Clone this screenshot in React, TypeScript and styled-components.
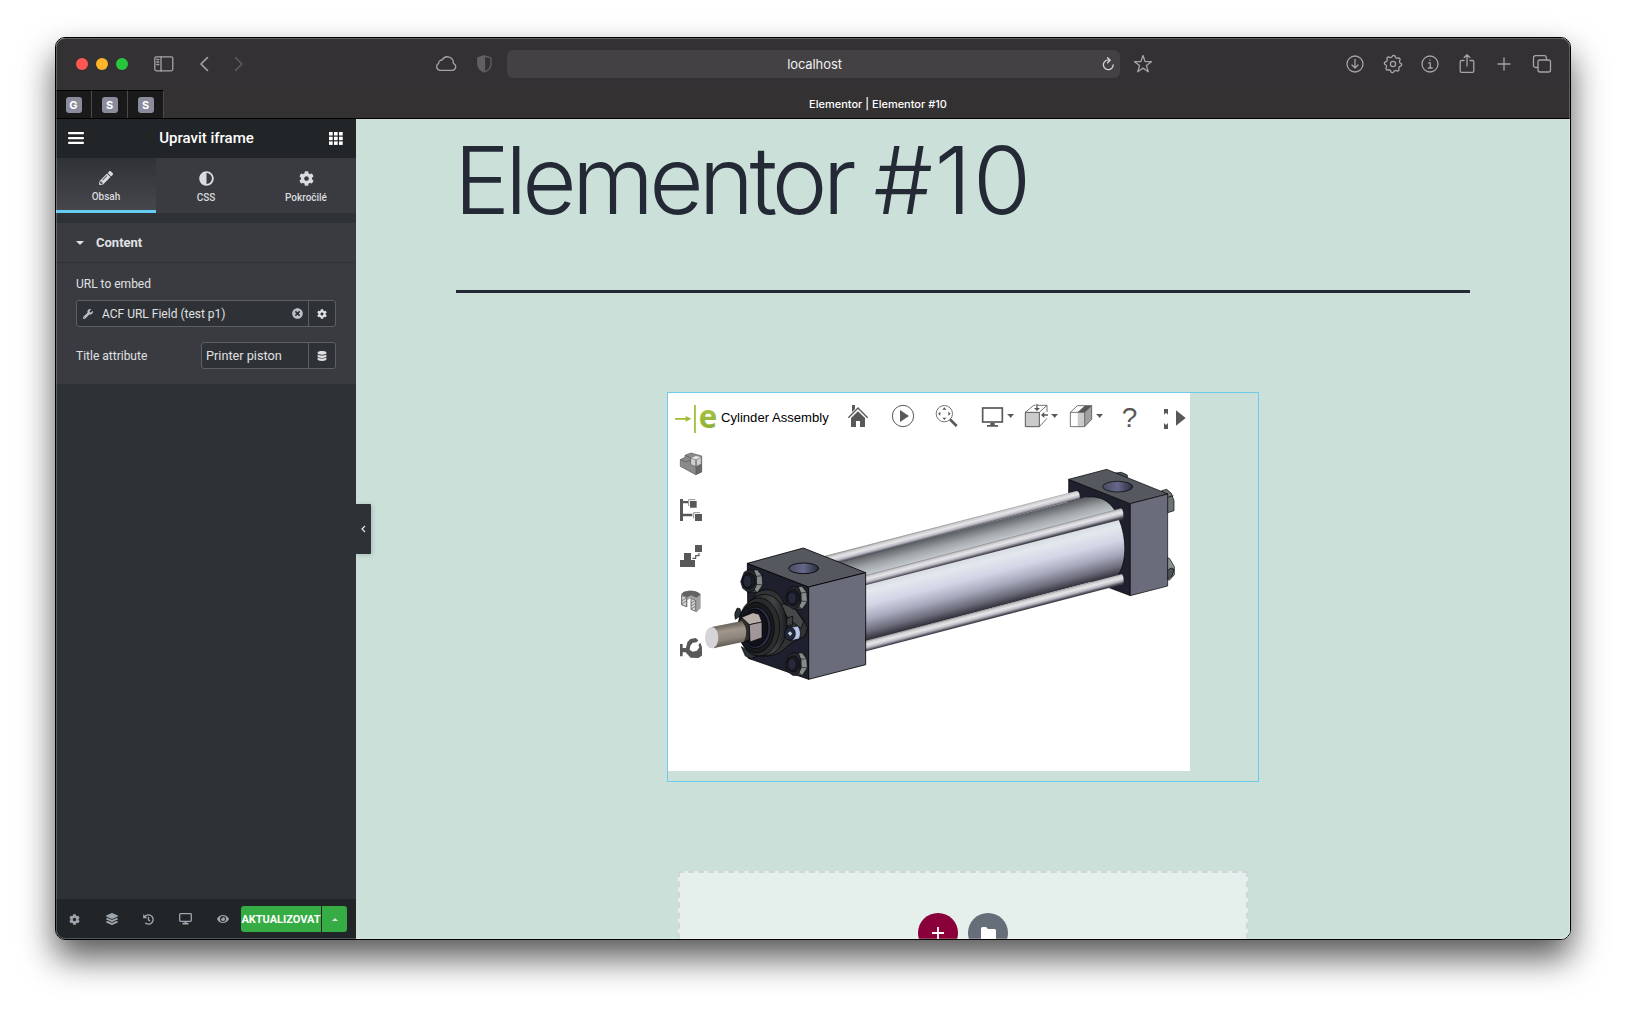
import React from 'react';
import styled, { createGlobalStyle } from 'styled-components';
import { FaCog, FaLayerGroup, FaHistory, FaEye, FaWrench, FaDatabase, FaAdjust, FaTimesCircle, FaPencilAlt } from 'react-icons/fa';

const Global = createGlobalStyle`
  html, body { margin: 0; padding: 0; background: #fff; overflow: hidden; }
  * { box-sizing: border-box; }
  svg { display: block; flex: none; }
`;

const Desktop = styled.div`
  width: 1626px;
  height: 1013px;
  padding: 37px 55px 73px;
  overflow: hidden;
  background: #fff;
`;

const Window = styled.div`
  position: relative;
  width: 1516px;
  height: 903px;
  border: 1px solid #000;
  border-radius: 10px;
  overflow: hidden;
  display: flex;
  flex-direction: column;
  box-shadow: 0 18px 34px rgba(0, 0, 0, 0.66);
  &::after {
    content: '';
    position: absolute;
    inset: 0;
    border-radius: 9px;
    pointer-events: none;
    box-shadow: inset 0 0 0 1px rgba(255, 255, 255, 0.22);
  }
`;

const Toolbar = styled.header`
  height: 52px;
  background: #333134;
  display: flex;
  align-items: center;
  padding-left: 20px;
  color: #a5a4a6;
`;

const Light = styled.span<{ $color: string }>`
  width: 12px;
  height: 12px;
  margin-right: 8px;
  border-radius: 50%;
  background: ${(p) => p.$color};
`;

const ChromeIcon = styled.svg<{ $ml: number }>`
  margin-left: ${(p) => p.$ml}px;
  fill: none;
  stroke: currentColor;
  stroke-width: 1.3;
  stroke-linecap: round;
  stroke-linejoin: round;
`;

const Address = styled.div`
  width: 613px;
  height: 28px;
  margin-left: 15px;
  border-radius: 6px;
  background: #434144;
  display: flex;
  align-items: center;
  justify-content: flex-end;
  padding-right: 5px;
  color: #d5d4d6;
`;

const Host = styled.span`
  flex: 1;
  text-align: center;
  padding-left: 20px;
  font: 400 13px Inter, sans-serif;
  letter-spacing: -0.1px;
  color: #f1f0f1;
`;

const TabBar = styled.div`
  height: 29px;
  background: #333132;
  border-bottom: 1px solid #000;
  display: flex;
`;

const Pinned = styled.div`
  width: 36px;
  border-top: 1px solid #000;
  border-right: 1px solid #4b494b;
  background: #1b1a1b;
  display: flex;
  align-items: center;
  justify-content: center;
`;

const Favicon = styled.span`
  width: 16px;
  height: 16px;
  border-radius: 3px;
  background: #8c8b9c;
  color: #fff;
  font: 700 11px/16px Inter, sans-serif;
  text-align: center;
`;

const TabTitle = styled.div`
  flex: 1;
  padding-left: 22px;
  text-align: center;
  font: 500 11px/29px Inter, sans-serif;
  color: #fff;
`;

const Body = styled.div`
  flex: 1;
  display: flex;
  min-height: 0;
`;

const Panel = styled.aside`
  width: 300px;
  background: #2e3135;
  display: flex;
  flex-direction: column;
  font-family: Roboto, sans-serif;
  color: #e0e1e3;
`;

const PanelHeader = styled.div`
  height: 39px;
  background: #222527;
  display: flex;
  align-items: center;
  justify-content: space-between;
  padding: 0 13px 1px 12px;
  fill: #fff;
`;

const PanelTitle = styled.h1`
  margin: 0;
  font-size: 15px;
  font-weight: 500;
  line-height: 18px;
  color: #fff;
`;

const Tabs = styled.div`
  display: flex;
  height: 55px;
  background: #393b40;
`;

const Tab = styled.div<{ $active?: boolean }>`
  flex: 1;
  padding-top: 13px;
  display: flex;
  flex-direction: column;
  align-items: center;
  gap: 5px;
  font-size: 10px;
  line-height: 13px;
  font-weight: 500;
  color: #dadbdd;
  background: ${(p) => (p.$active ? 'linear-gradient(#2f3236, #46474c)' : 'transparent')};
  border-bottom: ${(p) => (p.$active ? '3px solid #65cbf1' : '0')};
`;

const Section = styled.section`
  margin-top: 10px;
  height: 161px;
  background: #393b40;
`;

const SectionHead = styled.div`
  height: 40px;
  border-bottom: 1px solid #2e3135;
  display: flex;
  align-items: center;
  gap: 12px;
  padding-left: 20px;
  font-size: 13px;
  font-weight: 700;
`;

const Caret = styled.i<{ $up?: boolean; $size: number }>`
  border: ${(p) => p.$size}px solid transparent;
  border-${(p) => (p.$up ? 'bottom' : 'top')}-color: #e0e1e3;
  border-${(p) => (p.$up ? 'top' : 'bottom')}-width: 0;
`;

const Fields = styled.div`
  padding: 12px 20px 0;
  font-size: 12px;
`;

const Label = styled.label`
  display: block;
  line-height: 18px;
`;

const FieldRow = styled.div<{ $gap: number }>`
  display: flex;
  align-items: center;
  justify-content: space-between;
  margin-top: ${(p) => p.$gap}px;
`;

const Control = styled.div<{ $width: number; $pad: number }>`
  width: ${(p) => p.$width}px;
  height: 27px;
  border: 1px solid #5c5f64;
  border-radius: 3px;
  background: #2e3135;
  display: flex;
  align-items: center;
  padding-left: ${(p) => p.$pad}px;
`;

const Value = styled.span<{ $size: number }>`
  flex: 1;
  font-size: ${(p) => p.$size}px;
  white-space: nowrap;
`;

const WrenchBox = styled.span`
  width: 19px;
  color: #b9c2cb;
`;

const ClearBox = styled.span`
  margin-right: 5px;
  color: #b9c2cb;
`;

const Addon = styled.span`
  width: 27px;
  height: 25px;
  border-left: 1px solid #5c5f64;
  display: flex;
  align-items: center;
  justify-content: center;
`;

const PanelFooter = styled.footer`
  margin-top: auto;
  height: 40px;
  background: #222527;
  display: flex;
  align-items: center;
  color: #9da5ae;
`;

const FooterTool = styled.span`
  width: 37px;
  display: flex;
  justify-content: center;
`;

const Update = styled.div`
  display: flex;
  gap: 1px;
  height: 26px;
  color: #fff;
`;

const UpdateButton = styled.span<{ $width: number; $right?: boolean }>`
  width: ${(p) => p.$width}px;
  background: #36ad44;
  border-radius: ${(p) => (p.$right ? '0 3px 3px 0' : '3px 0 0 3px')};
  display: flex;
  align-items: center;
  justify-content: center;
  font-size: 11px;
  font-weight: 700;
  white-space: nowrap;
`;

const Preview = styled.main`
  position: relative;
  flex: 1;
  background: #cbe0d9;
  overflow: hidden;
`;

const Collapse = styled.div`
  position: absolute;
  left: 0;
  top: 385px;
  width: 15px;
  height: 50px;
  background: #2e3135;
  border-radius: 0 1px 1px 0;
  box-shadow: 1px 1px 5px rgba(0, 0, 0, 0.18);
  display: flex;
  align-items: center;
  justify-content: center;
`;

const PageTitle = styled.h2`
  margin: 0 98px;
  height: 171px;
  padding-top: 5px;
  font: 300 94px/112px Inter, sans-serif;
  letter-spacing: -4.8px;
  color: #242936;
  white-space: nowrap;
`;

const PageNumber = styled.span`
  letter-spacing: 1.6px;
`;

const Rule = styled.hr`
  margin: 0 100px;
  width: 1014px;
  height: 3px;
  border: 0;
  background: #242936;
`;

const Widget = styled.div`
  width: 592px;
  height: 390px;
  margin: 99px 0 0 311px;
  border: 1px solid #6ecbea;
`;

const Viewer = styled.div`
  width: 522px;
  height: 378px;
  background: #fff;
`;

const ViewerBar = styled.div`
  height: 48px;
  padding: 11px 0 0 7px;
  display: flex;
  align-items: flex-start;
`;

const Tool = styled.svg<{ $ml?: number }>`
  margin-left: ${(p) => p.$ml || 0}px;
  fill: #585858;
  overflow: visible;
`;

const ModelName = styled.span`
  width: 129px;
  padding-left: 3px;
  font: 13.1px/28px 'Liberation Sans', Arial, sans-serif;
  color: #000;
  white-space: nowrap;
`;

const ViewerBody = styled.div`
  display: flex;
`;

const SideTools = styled.div`
  width: 37px;
  padding: 11px 0 0 12px;
  display: flex;
  flex-direction: column;
  gap: 22px;
`;

const DropZone = styled.div`
  width: 570px;
  height: 120px;
  margin: 89px 0 0 322px;
  padding-top: 40px;
  border: 2px dashed #cfd7dc;
  background: #e5efeb;
  display: flex;
  justify-content: center;
  gap: 10px;
`;

const Round = styled.span<{ $color: string }>`
  width: 40px;
  height: 40px;
  border-radius: 50%;
  background: ${(p) => p.$color};
  display: flex;
  align-items: center;
  justify-content: center;
`;

const gearPath = Array.from({ length: 33 }, (_, i) => {
  const a = (i / 32) * Math.PI * 2;
  const r = i % 4 < 2 ? 8.6 : 6.9;
  return `${i ? 'L' : 'M'}${(10 + r * Math.cos(a)).toFixed(2)},${(10 + r * Math.sin(a)).toFixed(2)}`;
}).join('');

function BrowserToolbar() {
  return (
    <Toolbar>
      <Light $color="#ff5650" />
      <Light $color="#ffb429" />
      <Light $color="#28c73b" />
      <ChromeIcon $ml={18} width="20" height="16" viewBox="0 0 20 16">
        <rect x="0.8" y="0.8" width="18" height="14" rx="1.5" />
        <path d="M7 1v14M2.8 3.5h2M2.8 6h2M2.8 8.5h2" />
      </ChromeIcon>
      <ChromeIcon $ml={25} width="10" height="16" viewBox="0 0 10 16"><path d="M8.5 1.5 2 8l6.500 6.500" strokeWidth="1.600" /></ChromeIcon>
      <ChromeIcon $ml={25} width="10" height="16" viewBox="0 0 10 16" opacity="0.35"><path d="M1.500 1.500 8 8l-6.500 6.500" strokeWidth="1.600" /></ChromeIcon>
      <ChromeIcon $ml={191} width="22" height="16" viewBox="0 0 22 16">
        <path d="M5.300 14.300h11.700a3.600 3.600 0 0 0 1.300-7 5.900 5.900 0 0 0-11.100-3.300 3.200 3.200 0 0 0-3.500 3.300 3.700 3.700 0 0 0 1.600 7z" />
      </ChromeIcon>
      <ChromeIcon $ml={20} width="15" height="18" viewBox="0 0 15 18" opacity="0.4">
        <path d="M7.500 1 14 2.800V9c0 4-3 6.500-6.500 8C4 15.500 1 13 1 9V2.800z" />
        <path d="M7.500 1v16C4 15.500 1 13 1 9V2.800z" fill="currentColor" />
      </ChromeIcon>
      <Address>
        <Host>localhost</Host>
        <ChromeIcon $ml={0} width="13" height="15" viewBox="0 0 13 15"><path d="M8 3.200a4.900 4.900 0 1 0 3.200 4.600M5.600.8 8.200 3.200 5.600 5.700" /></ChromeIcon>
      </Address>
      <ChromeIcon $ml={13} width="20" height="20" viewBox="0 0 20 20">
        <path d="m10 1.500 2.100 6.100 6.400.1-5.100 3.900 1.900 6.200-5.300-3.700-5.300 3.700 1.900-6.200L1.500 7.700l6.400-.1z" />
      </ChromeIcon>
      <ChromeIcon $ml={192} width="20" height="20" viewBox="0 0 20 20"><circle cx="10" cy="10" r="8" /><path d="M10 5.500v8.500M7 11l3 3 3-3" /></ChromeIcon>
      <ChromeIcon $ml={18} width="20" height="20" viewBox="0 0 20 20"><path d={gearPath} /><circle cx="10" cy="10" r="2.600" /></ChromeIcon>
      <ChromeIcon $ml={17} width="20" height="20" viewBox="0 0 20 20"><circle cx="10" cy="10" r="8" /><path d="M8.500 8.800H10.300V14M8.300 14h4M10 5.900v.3" /></ChromeIcon>
      <ChromeIcon $ml={17} width="20" height="22" viewBox="0 0 20 22"><path d="M7 7.500H4.500a1.300 1.300 0 0 0-1.300 1.300V18a1.300 1.300 0 0 0 1.300 1.300h11a1.300 1.300 0 0 0 1.300-1.300V8.800a1.300 1.300 0 0 0-1.300-1.300H13M10 13V2M7.200 4.500 10 1.800l2.800 2.700" /></ChromeIcon>
      <ChromeIcon $ml={19} width="16" height="16" viewBox="0 0 16 16"><path d="M8 2v12M2 8h12" /></ChromeIcon>
      <ChromeIcon $ml={20} width="20" height="20" viewBox="0 0 20 20"><rect x="6" y="6" width="12.500" height="12" rx="2" /><path d="M5.800 13.500H3.500a2 2 0 0 1-2-2V3.700a2 2 0 0 1 2-2h8.800a2 2 0 0 1 2 2v2" /></ChromeIcon>
    </Toolbar>
  );
}

function ElementorPanel() {
  return (
    <Panel>
      <PanelHeader>
        <svg width="16" height="12" viewBox="0 0 16 12"><rect width="16" height="2.200" rx="1" /><rect y="5" width="16" height="2.200" rx="1" /><rect y="9.800" width="16" height="2.200" rx="1" /></svg>
        <PanelTitle>Upravit iframe</PanelTitle>
        <svg width="14" height="13" viewBox="0 0 14 13">
          {[0, 5, 10].map((x) => [0, 4.7, 9.4].map((y) => <rect key={`${x}-${y}`} x={x} y={y} width="3.700" height="3.500" />))}
        </svg>
      </PanelHeader>
      <Tabs>
        <Tab $active><FaPencilAlt size={14} />Obsah</Tab>
        <Tab><FaAdjust size={15} />CSS</Tab>
        <Tab><FaCog size={15} />Pokročilé</Tab>
      </Tabs>
      <Section>
        <SectionHead><Caret $size={4} />Content</SectionHead>
        <Fields>
          <Label>URL to embed</Label>
          <FieldRow $gap={7}>
            <Control $width={260} $pad={6}>
              <WrenchBox><FaWrench size={10} /></WrenchBox>
              <Value $size={12}>ACF URL Field (test p1)</Value>
              <ClearBox><FaTimesCircle size={11} /></ClearBox>
              <Addon><FaCog size={10} /></Addon>
            </Control>
          </FieldRow>
          <FieldRow $gap={15}>
            <Label>Title attribute</Label>
            <Control $width={135} $pad={4}>
              <Value $size={12.7}>Printer piston</Value>
              <Addon><FaDatabase size={10} /></Addon>
            </Control>
          </FieldRow>
        </Fields>
      </Section>
      <PanelFooter>
        <FooterTool><FaCog size={11} /></FooterTool>
        <FooterTool><FaLayerGroup size={12} /></FooterTool>
        <FooterTool><FaHistory size={11} /></FooterTool>
        <FooterTool>
          <svg width="13" height="12" viewBox="0 0 13 12" fill="none" stroke="currentColor" strokeWidth="1.300"><rect x="0.700" y="0.700" width="11.600" height="7.600" rx="0.800" /><path d="M3.500 10.600h6M6.500 8.500v2" strokeWidth="1.800" /></svg>
        </FooterTool>
        <FooterTool><FaEye size={12} /></FooterTool>
        <Update>
          <UpdateButton $width={80}>AKTUALIZOVAT</UpdateButton>
          <UpdateButton $width={25} $right><Caret $up $size={3} /></UpdateButton>
        </Update>
      </PanelFooter>
    </Panel>
  );
}

function ViewerToolbar() {
  return (
    <ViewerBar>
      <Tool width="43" height="30" viewBox="45 57 129 90">
        <defs><linearGradient id="leaf" x1="0" y1="0" x2="0" y2="1"><stop offset="0" stopColor="#b5d04b" /><stop offset="1" stopColor="#86a832" /></linearGradient></defs>
        <path d="M45 99h32v-6l17 8.500-17 8.500v-6H45z" fill="#9cbd35" />
        <rect x="102" y="60" width="5.500" height="84" fill="#9fc03a" />
        <text x="116" y="128" fontFamily="Open Sans, sans-serif" fontWeight="700" fontSize="94" fill="url(#leaf)">e</text>
      </Tool>
      <ModelName>Cylinder Assembly</ModelName>
      <Tool width="22" height="24" viewBox="561 57 66 72">
        <path d="M576 60h9v12l-9 9zM573 99l21-20 21 20v27h-15v-18h-12v18h-15z" />
        <path d="m565 98 29-29 29 29" fill="none" stroke="#585858" strokeWidth="4" />
      </Tool>
      <Tool $ml={22} width="24" height="24" viewBox="693 57 72 72"><circle cx="729" cy="93" r="32" fill="none" stroke="#585858" strokeWidth="3" /><path d="M720 75l27 18-27 18z" /></Tool>
      <Tool $ml={20} width="24" height="24" viewBox="15 57 72 72">
        <circle cx="43" cy="86" r="24.500" fill="none" stroke="#585858" strokeWidth="2.500" />
        <path d="m60 103 20 20" stroke="#585858" strokeWidth="8" />
        <path d="M43 67l6 7H37zM43 105l6-7H37zM24 86l7-6v12zM62 86l-7-6v12z" />
      </Tool>
      <Tool $ml={22} width="34" height="24" viewBox="153 57 102 72"><rect x="158" y="69" width="59" height="42" fill="none" stroke="#585858" strokeWidth="5" /><path d="M181 113h13v7h10v5h-33v-5h10zM231 87h21l-6 7-4 5-4-5z" /></Tool>
      <Tool $ml={9} width="35" height="24" viewBox="282 57 105 72">
        <path d="M286 82h42v43h-42z" fill="#cbcbcb" stroke="#585858" strokeWidth="3" />
        <path d="M286 82l25-21h6M324 61h27L328 82M351 61v20M351 100l-23 25" fill="none" stroke="#585858" strokeWidth="2.500" />
        <path d="M319 57h4v12h7l-9 9-9-9h7zM354 88v4h-11v7l-10-9 10-9v7zM363 87h21l-6 7-4 5-4-5z" />
      </Tool>
      <Tool $ml={10} width="35" height="24" viewBox="417 57 105 72">
        <path d="M421 82h22v43h-22z" fill="#fff" /><path d="M443 82h21v43h-21z" fill="#cbcbcb" /><path d="M464 82l21-20v41l-21 22z" fill="#a0a0a0" /><path d="M443 82l21-20h21l-21 20z" />
        <path d="M421 82h43v43h-43zl21-20h43v41l-21 22M464 82l21-20" fill="none" stroke="#585858" strokeWidth="2.500" />
        <path d="M498 87h21l-6 7-4 5-4-5z" />
      </Tool>
      <Tool $ml={18} width="15" height="24" viewBox="576 57 45 72"><text x="575" y="126" fontFamily="Liberation Sans, sans-serif" fontSize="84">?</text></Tool>
      <Tool $ml={26} width="6" height="26" viewBox="699 57 18 78"><path d="M702 72h12v17l-6-6-6 6zM702 132h12v-18l-6 6-6-6z" /></Tool>
      <Tool $ml={6} width="12" height="24" viewBox="735 57 36 72"><path d="M738 76l29 23-29 23z" /></Tool>
    </ViewerBar>
  );
}

function ViewerSideTools() {
  return (
    <SideTools>
      <Tool width="23" height="24" viewBox="60 6 69 72">
        <path d="M61 29l14-7V16l18-7 32 9v48l-18 8-46-25z" fill="#8a8a8c" />
        <path d="M108 50l17-7v23l-17 8z" fill="#69696b" />
        <path d="M61 29l14-7V16l18-7 32 9v48l-18 8-46-25z" fill="none" stroke="#585858" strokeWidth="2" />
        <path d="M92 24l16 5v21l-16-6zM108 29l16-8v21l-16 8z" fill="#cfcfcf" stroke="#585858" strokeWidth="2" />
        <path d="M92 24l16-7 16 4-16 8z" fill="#e4e4e4" stroke="#777" strokeWidth="1" />
        <path d="M108 50v23M76 16l16 8M61 29l17 7 14-6" stroke="#585858" strokeWidth="2" fill="none" />
      </Tool>
      <Tool width="23" height="24" viewBox="60 144 69 72"><path d="M60 147h9v6h15v7H69v31h28v8H69v14h-9zM90 153h20v20H90zM105 192h21v21h-21z" /><path d="M86 168v-19h20M101 205v-17h19" fill="none" stroke="#585858" strokeWidth="2" /></Tool>
      <Tool width="23" height="24" viewBox="60 282 69 72"><path d="M105 285h21v21h-21zM60 330h12v-21h21v21h12v21H60z" /><path d="M97 325h10v-8h10v-8" fill="none" stroke="#585858" strokeWidth="3.500" /></Tool>
      <Tool width="23" height="24" viewBox="60 420 69 72">
        <path d="M64 433c8-14 48-14 58 1v41l-14 13V450L93 444l-11 6v22l-18-6z" fill="#a2a2a2" />
        <path d="M64 433c8-14 48-14 58 1l-13 9-16-7-11 6z" fill="#636363" />
        <path d="M65 436l15 6v28l-15-6zM93 445l14 6v33l-14-6z" fill="#d3d3d3" stroke="#585858" strokeWidth="2.500" />
        <path d="M66 452l13-8M66 461l13-8M94 459l12-8M94 468l12-8M94 477l12-8" stroke="#585858" strokeWidth="2" />
      </Tool>
      <Tool width="23" height="24" viewBox="60 558 69 72"><path d="M60 582h8v12h11v13H68v12h-8zM82 577l9-10 16-3 8 7-5 6-12 1-7 9-2 12 9 6 13-3 7-10-3-7 6-7 5 14v25l-11 7-23-1-14-15v-14z" /></Tool>
    </SideTools>
  );
}

function Nut({ x, y }: { x: number; y: number }) {
  return (
    <g transform={`translate(${x} ${y})`} stroke="#08090c" strokeWidth="1.800">
      <path d="M-14-33 16-34 30-16 32 12 16 35-10 34z" fill="#3b4244" />
      <path d="M4-32 16-34 30-16 32 12 16 35 6 24 14 10 12-14z" fill="#848c8a" />
      <path d="M12-14 30-16M14 10l18 2" />
      <path d="M-24-26-8-35 6-30 13-12 12 16 4 30-12 34-28 22-34 2z" fill="#24272d" />
      <ellipse cx="-10" cy="0" rx="19" ry="24" fill="#191b22" />
      <ellipse cx="-14" cy="1" rx="13" ry="18" fill="#262939" />
    </g>
  );
}

function CylinderModel() {
  return (
    <svg width="485" height="330" viewBox="135 -27 1455 990" strokeLinejoin="round">
      <defs>
        <linearGradient id="tube" gradientUnits="userSpaceOnUse" x1="1000" y1="218" x2="1063" y2="462">
          <stop offset="0" stopColor="#606468" /><stop offset="0.120" stopColor="#a0a5a8" /><stop offset="0.250" stopColor="#cbd1d5" />
          <stop offset="0.420" stopColor="#e3e8ee" /><stop offset="0.580" stopColor="#d2d5e5" /><stop offset="0.740" stopColor="#a5a8ba" />
          <stop offset="0.880" stopColor="#6b6b79" /><stop offset="1" stopColor="#24212b" />
        </linearGradient>
        {[[1, 900, 211], [2, 1000, 274], [3, 1000, 471]].map(([n, x, y]) => (
          <linearGradient key={n} id={`rod${n}`} gradientUnits="userSpaceOnUse" x1={x} y1={y} x2={x + 7.6} y2={y + 29}>
            <stop offset="0" stopColor="#7c7c7e" /><stop offset="0.200" stopColor="#cdcdd0" /><stop offset="0.450" stopColor="#e6e6e9" />
            <stop offset="0.720" stopColor="#bbbac4" /><stop offset="1" stopColor="#44424e" />
          </linearGradient>
        ))}
        <linearGradient id="bore"><stop offset="0" stopColor="#4a4c60" /><stop offset="0.500" stopColor="#65688a" /><stop offset="1" stopColor="#2a2c3c" /></linearGradient>
        <linearGradient id="shaft" x1="0.400" y1="0" x2="0.600" y2="1"><stop offset="0" stopColor="#4e4943" /><stop offset="0.350" stopColor="#a0968c" /><stop offset="0.650" stopColor="#8d847b" /><stop offset="1" stopColor="#48433f" /></linearGradient>
        <linearGradient id="gland"><stop offset="0" stopColor="#17181a" /><stop offset="0.700" stopColor="#424445" /><stop offset="1" stopColor="#1b1c1e" /></linearGradient>
      </defs>

      <g stroke="#000" strokeWidth="2">
        <path d="M1360 70l24-3 18 8v12z" fill="#4d5557" />
        <path d="M1505 122l15-4 14 12 8 22v30l-19 6z" fill="#6b7374" /><path d="M1523 142l17-5" />
        <path d="M1521 322l8 4 14 24v24l-14 16h-8z" fill="#8a9292" /><path d="M1521 362l12-8 9 4-6 20-15 10z" fill="#4d5557" />
        <path d="M1226 88l185 73v276l-67-25-118-42z" fill="#1f202e" />
        <path d="M1226 88l114-30 184 74-113 29z" fill="#55585e" />
        <path d="M1411 161l112-29v276l-112 29z" fill="#6a6c7b" />
        <ellipse cx="1373" cy="110" rx="45" ry="16" fill="url(#bore)" />
      </g>

      <path d="M540 335 1280 141C1330 136 1360 162 1376 205C1403 270 1398 340 1375 374L600 578z" fill="url(#tube)" />
      <path d="M1280 141c50-5 80 21 96 64 27 65 22 135-1 169" fill="none" stroke="#000" strokeWidth="2" />
      <path d="M490 319 1248 123q13 0 11 23L530 340z" fill="url(#rod1)" />
      <path d="M610 377 1383 175q9 6 7 32L610 407z" fill="url(#rod2)" />
      <path d="M610 574 1385 372q8 6 5 31L610 606z" fill="url(#rod3)" />

      <g stroke="#000" strokeWidth="2.500">
        <path d="M262 340l184 71v277l-181-63z" fill="#1f202e" />
        <path d="M262 340l168-46 187 74-171 43z" fill="#55585e" />
        <path d="M446 411l171-43v276l-171 44z" fill="#6a6c7b" />
        <ellipse cx="431" cy="355" rx="45" ry="16" fill="url(#bore)" />
      </g>
      <Nut x={276} y={393} />
      <g stroke="#000" strokeWidth="2">
        <path d="M232 474l8 2 4 20-18 12q-6-20 6-34zM244 590l50 28-22 8-16-8z" fill="#2c3038" />
        <path d="M285 432c30-22 70-18 88 30l30 12 28 36 12 24-8 24-40 20-25 22c-30 24-70 22-95 10z" fill="#303234" />
        <path d="M355 466l17-4 31 12 28 40-8 22-36-30z" fill="#454849" />
        <ellipse cx="313" cy="525" rx="68" ry="92" fill="url(#gland)" />
        <ellipse cx="297" cy="531" rx="62" ry="87" fill="#2b2c2e" />
        <ellipse cx="289" cy="533" rx="54" ry="76" fill="#191a1d" />
        <ellipse cx="287" cy="533" rx="46" ry="62" fill="#2a2d40" />
        <ellipse cx="284" cy="533" rx="40" ry="56" fill="#111219" />
        <path d="M380 506l18-8v26l-18 4z" fill="#3b3e40" />
      </g>
      <Nut x={410} y={443} />
      <Nut x={410} y={642} />
      <g stroke="#000" strokeWidth="2">
        <path d="M392 532l22-4q12 18 4 38l-24 6z" fill="#b8c4e6" />
        <ellipse cx="390" cy="551" rx="16" ry="20" fill="#22273a" />
        <path d="M382 550l8-8 8 8-7 10z" fill="#bfc9e6" />
        <path d="M232 520l14-18 22 22v47l-16 4z" fill="#302d2b" />
        <path d="M245 502l34-14 18 5 9 23-38 8z" fill="#b9afa9" />
        <path d="M268 524l38-8v47l-36 13z" fill="#a1969a" />
      </g>
      <path d="M155 531 246 513Q268 540 252 575L160 595z" fill="url(#shaft)" />
      <ellipse cx="155" cy="563" rx="20" ry="32" fill="#d5d5d7" />
    </svg>
  );
}

export default function App() {
  return (
    <Desktop>
      <Global />
      <Window>
        <BrowserToolbar />
        <TabBar>
          {['G', 'S', 'S'].map((letter, i) => <Pinned key={i}><Favicon>{letter}</Favicon></Pinned>)}
          <TabTitle>Elementor | Elementor #10</TabTitle>
        </TabBar>
        <Body>
          <ElementorPanel />
          <Preview>
            <PageTitle>Elementor <PageNumber>#10</PageNumber></PageTitle>
            <Rule />
            <Widget>
              <Viewer>
                <ViewerToolbar />
                <ViewerBody><ViewerSideTools /><CylinderModel /></ViewerBody>
              </Viewer>
            </Widget>
            <DropZone>
              <Round $color="#89003a"><svg width="12" height="12" viewBox="0 0 12 12"><path d="M6 0v12M0 6h12" stroke="#fff" strokeWidth="1.800" /></svg></Round>
              <Round $color="#656e79"><svg width="15" height="13" viewBox="0 0 15 13"><path d="M0 1.500Q0 0 1.500 0H5l2 2h6.500Q15 2 15 3.500v8q0 1.500-1.500 1.500h-12Q0 13 0 11.500z" fill="#fff" /></svg></Round>
            </DropZone>
            <Collapse><svg width="5" height="8" viewBox="0 0 5 8"><path d="M4 1 1 4l3 3" fill="none" stroke="#e0e1e3" strokeWidth="1.300" /></svg></Collapse>
          </Preview>
        </Body>
      </Window>
    </Desktop>
  );
}
